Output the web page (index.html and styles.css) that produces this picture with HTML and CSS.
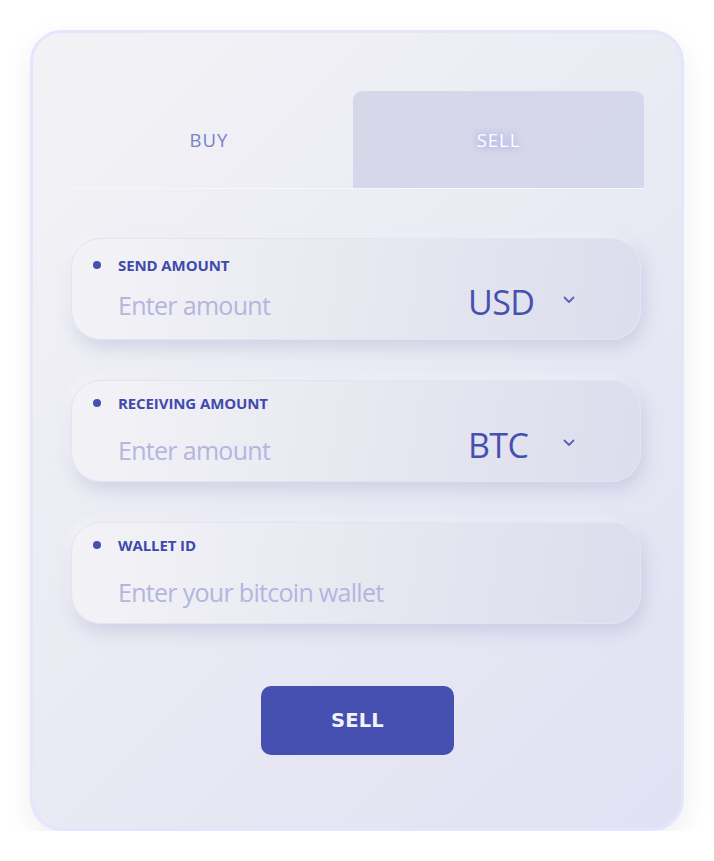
FILE: index.html
```html
<!DOCTYPE html>
<html>
<head>
<meta charset="utf-8">
<link rel="stylesheet" href="styles.css">
</head>
<body>
<div class="card">
  <div class="tabs">
    <div class="tab tab-buy">BUY</div>
    <div class="tab tab-active">SELL</div>
  </div>
  <div class="fields">
    <div class="field field-first">
      <div class="field-main">
        <div class="label"><span class="dot"></span>SEND AMOUNT</div>
        <div class="placeholder">Enter amount</div>
      </div>
      <div class="currency">
        <span class="cur-text">USD</span>
        <svg class="chev" width="12" height="8" viewBox="0 0 12 8"><path d="M1.5 1.5 L6 6 L10.5 1.5" fill="none" stroke="#5a62b8" stroke-width="1.8" stroke-linecap="round" stroke-linejoin="round"/></svg>
      </div>
    </div>
    <div class="field">
      <div class="field-main">
        <div class="label"><span class="dot"></span>RECEIVING AMOUNT</div>
        <div class="placeholder">Enter amount</div>
      </div>
      <div class="currency">
        <span class="cur-text">BTC</span>
        <svg class="chev" width="12" height="8" viewBox="0 0 12 8"><path d="M1.5 1.5 L6 6 L10.5 1.5" fill="none" stroke="#5a62b8" stroke-width="1.8" stroke-linecap="round" stroke-linejoin="round"/></svg>
      </div>
    </div>
    <div class="field">
      <div class="field-main">
        <div class="label"><span class="dot"></span>WALLET ID</div>
        <div class="placeholder">Enter your bitcoin wallet</div>
      </div>
    </div>
  </div>
  <div class="actions">
    <button class="btn">SELL</button>
  </div>
</div>
</body>
</html>
```
FILE: styles.css
```css
html, body {
  margin: 0;
  padding: 0;
  background: #ffffff;
}
body {
  padding: 30px 0 0 30px;
  font-family: "Open Sans", "Noto Sans", sans-serif;
}
.card {
  box-sizing: border-box;
  width: 654px;
  height: 801px;
  border: 3px solid #e3e6fd;
  border-radius: 32px;
  background: linear-gradient(135deg, #f3f3f6 0%, #ebebf4 45%, #e0e1f3 100%);
  box-shadow: 0 10px 30px rgba(0, 0, 0, 0.07);
  padding: 58px 37px 0 39px;
}
.tabs {
  display: flex;
  height: 97px;
  border-bottom: 1px solid #f7f7fb;
}
.tab {
  display: flex;
  align-items: center;
  justify-content: center;
  font-size: 18.5px;
  letter-spacing: 1px;
  color: #7c81c8;
  border-radius: 9px 9px 0 0;
}
.tab-buy {
  width: 281px;
  box-sizing: border-box;
  padding-right: 7px;
}
.tab-active {
  flex: 1;
  background: linear-gradient(135deg, #d7d7ea, #d5d7ea);
  color: #ffffff;
  text-shadow: 0 0 6px #9a9ee0, 0 0 10px #b4b7ea;
}
.fields {
  display: flex;
  flex-direction: column;
  gap: 40px;
  margin-top: 49px;
  margin-right: 3px;
}
.field {
  box-sizing: border-box;
  height: 102px;
  margin-left: -1px;
  border-radius: 30px;
  border: 1px solid #e2e3f7;
  background: linear-gradient(100deg, #f3f3f7 0%, #e8e8f1 50%, #dcdded 100%);
  box-shadow: 3px 7px 18px rgba(155, 158, 198, 0.36), -4px -4px 10px rgba(255, 255, 255, 0.5);
  display: flex;
  align-items: stretch;
  padding: 0 0 0 21px;
}
.field-main {
  flex: 1;
  display: flex;
  flex-direction: column;
  padding-top: 10px;
}
.field-first .field-main {
  padding-top: 14px;
}
.label {
  display: flex;
  align-items: center;
  font-size: 15px;
  font-weight: 700;
  color: #3f4aad;
  height: 24px;
  letter-spacing: -0.1px;
}
.dot {
  width: 8px;
  height: 8px;
  border-radius: 50%;
  background: #4650b0;
  margin-right: 17px;
}
.placeholder {
  margin-top: 18px;
  padding-left: 25px;
  font-size: 25px;
  color: #b3b6df;
  letter-spacing: -0.7px;
  line-height: 34px;
}
.field-first .placeholder {
  margin-top: 11px;
}
.currency {
  display: flex;
  align-items: center;
  padding-top: 28px;
  padding-right: 65px;
}
.field-first .currency {
  padding-top: 25px;
}
.cur-text {
  width: 95px;
  font-size: 34px;
  color: #4650b0;
  letter-spacing: -0.6px;
}
.chev {
  display: block;
  margin-top: -4px;
}
.actions {
  display: flex;
  justify-content: center;
  margin-top: 62px;
  margin-left: -1px;
}
.btn {
  width: 193px;
  height: 69px;
  border: none;
  border-radius: 10px;
  background: #4650b0;
  color: #f2f2fa;
  font-family: "DejaVu Sans", sans-serif;
  font-weight: 700;
  font-size: 19.5px;
  letter-spacing: 0.2px;
}
```
